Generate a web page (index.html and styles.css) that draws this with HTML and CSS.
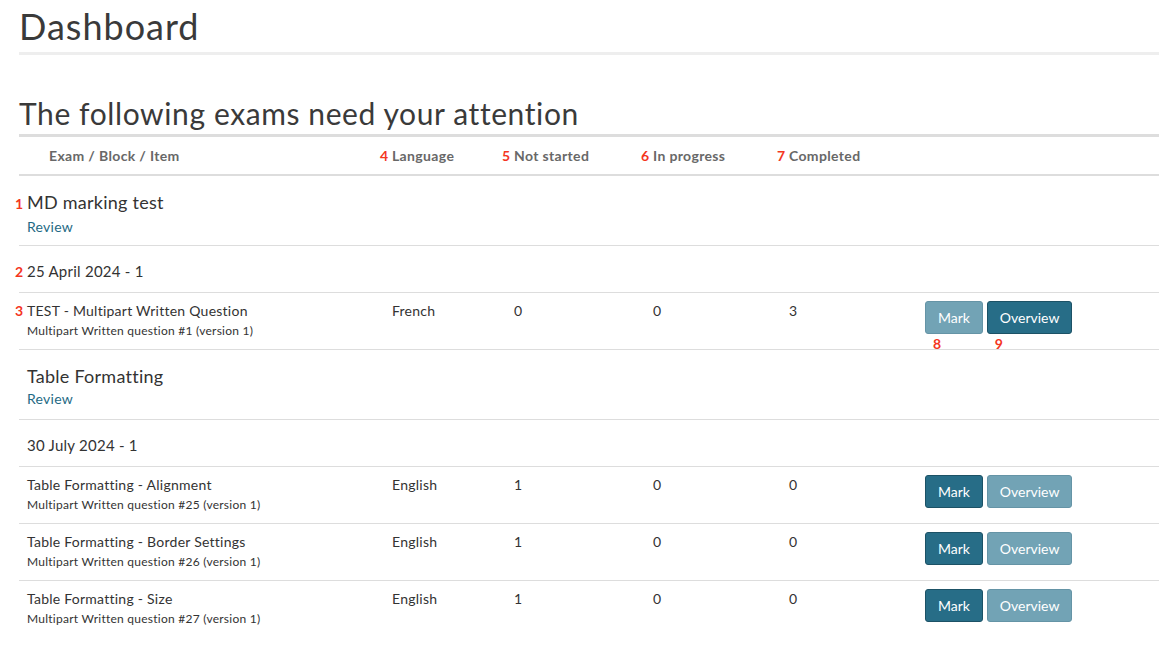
FILE: index.html
```html
<!DOCTYPE html>
<html lang="en">
<head>
  <meta charset="UTF-8">
  <meta name="viewport" content="width=device-width, initial-scale=1.0">
  <title>Dashboard</title>
  <link rel="stylesheet" href="styles.css">
</head>
<body>
  <div class="container">
    <h1>Dashboard</h1>

    <h2>The following exams need your attention</h2>

    <table class="exams">
      <colgroup>
        <col class="c-name">
        <col class="c-lang">
        <col class="c-num1">
        <col class="c-num2">
        <col class="c-num3">
        <col>
      </colgroup>
      <thead>
        <tr>
          <th class="first">Exam / Block / Item</th>
          <th><span class="note">4</span>Language</th>
          <th><span class="note">5</span>Not started</th>
          <th><span class="note">6</span>In progress</th>
          <th><span class="note">7</span>Completed</th>
          <th></th>
        </tr>
      </thead>
      <tbody>
        <tr class="exam">
          <td colspan="6">
            <div class="exam-title"><span class="note">1</span>MD marking test</div>
            <a href="#" class="review">Review</a>
          </td>
        </tr>
        <tr class="block">
          <td colspan="6"><span class="note">2</span>25 April 2024 - 1</td>
        </tr>
        <tr class="item">
          <td>
            <div class="item-title"><span class="note">3</span>TEST - Multipart Written Question</div>
            <div class="item-sub">Multipart Written question #1 (version 1)</div>
          </td>
          <td>French</td>
          <td>0</td>
          <td>0</td>
          <td>3</td>
          <td class="actions">
            <span class="btn-wrap"><button class="btn light">Mark</button><span class="note below">8</span></span>
            <span class="btn-wrap"><button class="btn">Overview</button><span class="note below">9</span></span>
          </td>
        </tr>

        <tr class="exam">
          <td colspan="6">
            <div class="exam-title">Table Formatting</div>
            <a href="#" class="review">Review</a>
          </td>
        </tr>
        <tr class="block">
          <td colspan="6">30 July 2024 - 1</td>
        </tr>
        <tr class="item">
          <td>
            <div class="item-title">Table Formatting - Alignment</div>
            <div class="item-sub">Multipart Written question #25 (version 1)</div>
          </td>
          <td>English</td>
          <td>1</td>
          <td>0</td>
          <td>0</td>
          <td class="actions">
            <button class="btn">Mark</button>
            <button class="btn light">Overview</button>
          </td>
        </tr>
        <tr class="item">
          <td>
            <div class="item-title">Table Formatting - Border Settings</div>
            <div class="item-sub">Multipart Written question #26 (version 1)</div>
          </td>
          <td>English</td>
          <td>1</td>
          <td>0</td>
          <td>0</td>
          <td class="actions">
            <button class="btn">Mark</button>
            <button class="btn light">Overview</button>
          </td>
        </tr>
        <tr class="item last">
          <td>
            <div class="item-title">Table Formatting - Size</div>
            <div class="item-sub">Multipart Written question #27 (version 1)</div>
          </td>
          <td>English</td>
          <td>1</td>
          <td>0</td>
          <td>0</td>
          <td class="actions">
            <button class="btn">Mark</button>
            <button class="btn light">Overview</button>
          </td>
        </tr>
      </tbody>
    </table>
  </div>
</body>
</html>
```

FILE: styles.css
```css
body {
  font-family: Lato, "Open Sans", sans-serif;
  margin: 0;
  background: white;
  color: #333;
}
.container {
  width: 1140px;
  margin-left: 19px;
}
h1 {
  font-size: 36px;
  font-weight: 400;
  letter-spacing: 1px;
  color: #3a3a3a;
  margin: 0;
  padding-top: 6px;
  line-height: 40px;
  padding-bottom: 6px;
  border-bottom: 3px solid #eee;
}
h2 {
  font-size: 30px;
  font-weight: 400;
  letter-spacing: 0.6px;
  color: #3a3a3a;
  margin: 40px 0 0;
  line-height: 36px;
  padding-bottom: 3px;
  border-bottom: 3px solid #ddd;
}
.exams {
  width: 100%;
  border-collapse: collapse;
  table-layout: fixed;
}
.c-name { width: 365px; }
.c-lang { width: 122px; }
.c-num1 { width: 139px; }
.c-num2 { width: 136px; }
.c-num3 { width: 136px; }
th {
  text-align: left;
  font-size: 14px;
  font-weight: 700;
  letter-spacing: 0.35px;
  color: #686868;
  height: 37px;
  padding: 0 8px;
  border-bottom: 2px solid #ddd;
}
th.first {
  padding-left: 30px;
}
td {
  box-sizing: border-box;
  padding: 0 8px;
  font-size: 14px;
  letter-spacing: 0.25px;
  vertical-align: top;
  border-bottom: 1px solid #ddd;
}
.note {
  display: inline-block;
  width: 12px;
  margin-left: -12px;
  color: #f4361e;
  font-weight: 700;
  font-size: 14px;
  letter-spacing: 0;
}
.exam td {
  height: 70px;
  padding-top: 15px;
}
.exam-title {
  font-size: 18px;
  line-height: 22px;
  color: #333;
}
.review {
  display: inline-block;
  margin-top: 3px;
  font-size: 14px;
  color: #1f6a85;
  text-decoration: none;
}
.block td {
  height: 47px;
  padding-top: 4px;
  font-size: 15px;
  vertical-align: middle;
}
.item td {
  height: 57px;
  padding-top: 9px;
  font-size: 14px;
  line-height: 17px;
}
.item.last td {
  border-bottom: none;
}
.item-title {
  font-size: 14px;
}
.item-sub {
  margin-top: 5px;
  font-size: 12px;
  line-height: 14px;
}
.actions {
  padding-top: 8px !important;
}
.btn-wrap {
  position: relative;
  display: inline-block;
}
.note.below {
  position: absolute;
  left: 8px;
  top: 34px;
  margin-left: 0;
}
.btn {
  font-family: inherit;
  font-size: 14px;
  color: white;
  background: #276d87;
  border: 1px solid #1c5266;
  border-radius: 3px;
  height: 33px;
  padding: 0 12px;
  cursor: pointer;
}
.btn.light {
  background: #72a3b5;
  border-color: #6594a6;
}
```
